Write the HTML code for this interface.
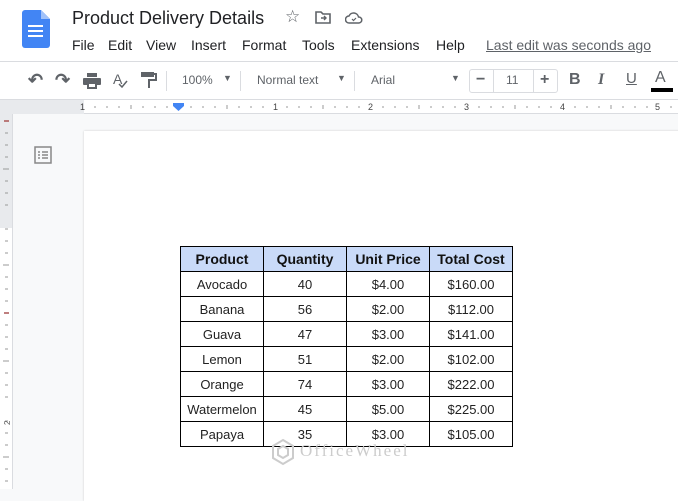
<!DOCTYPE html>
<html><head><style>
*{margin:0;padding:0;box-sizing:border-box}
body{width:678px;height:489px;overflow:hidden;background:#f8f9fa;font-family:"Liberation Sans",Arial,sans-serif;position:relative}
.abs{position:absolute}
.menu span{margin-right:0}
table{border-collapse:collapse;position:absolute;left:180px;top:246px;font-size:13px;color:#222}
td{border:1px solid #000;width:83px;height:25px;text-align:center;padding:0}
tr.h td{background:#c9daf8;font-weight:bold;font-size:14px;color:#111}
</style></head><body>
<div class="abs" style="left:0;top:0;width:678px;height:62px;background:#fff;border-bottom:1px solid #dadce0"></div>
<!-- docs icon -->
<svg class="abs" style="left:22px;top:10px" width="28" height="38" viewBox="0 0 28 38">
<path d="M3 0H19L28 9V35a3 3 0 0 1-3 3H3a3 3 0 0 1-3-3V3a3 3 0 0 1 3-3z" fill="#4285f4"/>
<path d="M19 0V9H28z" fill="#a1c2fa"/>
<rect x="6" y="15" width="15" height="2" fill="#fff"/><rect x="6" y="20" width="15" height="2" fill="#fff"/><rect x="6" y="25" width="15" height="2" fill="#fff"/></svg>
<div class="abs" style="left:72px;top:8px;font-size:18px;color:#202124">Product Delivery Details</div>
<div class="abs" style="left:285px;top:7px;font-size:17px;color:#5f6368">☆</div>
<svg class="abs" style="left:315px;top:11px" width="16" height="13" viewBox="0 0 16 13"><path d="M1 1h5l2 2h7v9H1z" fill="none" stroke="#5f6368" stroke-width="1.6"/><path d="M6 7h5M9 5l2 2-2 2" fill="none" stroke="#5f6368" stroke-width="1.4"/></svg>
<svg class="abs" style="left:345px;top:12px" width="18" height="12" viewBox="0 0 18 12"><path d="M4 11a3.5 3.5 0 0 1 0-7 5 5 0 0 1 9.5 1A3 3 0 0 1 14 11z" fill="none" stroke="#5f6368" stroke-width="1.5"/><path d="M7 7l1.5 1.5L11 6" fill="none" stroke="#5f6368" stroke-width="1.2"/></svg>
<div class="abs menu" style="top:37px;left:0;font-size:14px;color:#202124;white-space:nowrap">
<span class="abs" style="left:72px">File</span><span class="abs" style="left:108px">Edit</span><span class="abs" style="left:146px">View</span><span class="abs" style="left:191px">Insert</span><span class="abs" style="left:242px">Format</span><span class="abs" style="left:302px">Tools</span><span class="abs" style="left:351px">Extensions</span><span class="abs" style="left:436px">Help</span><span class="abs" style="left:486px;color:#5f6368;text-decoration:underline">Last edit was seconds ago</span></div>
<!-- toolbar -->
<div class="abs" style="left:0;top:62px;width:678px;height:38px;background:#fff;border-bottom:1px solid #dadce0"></div>
<div class="abs" style="top:70px;left:28px;font-size:18px;color:#5f6368;font-weight:bold">↶</div>
<div class="abs" style="top:70px;left:55px;font-size:18px;color:#5f6368;font-weight:bold">↷</div>
<svg class="abs" style="left:83px;top:73px" width="18" height="16"><rect x="4" y="0" width="10" height="4" fill="#5f6368"/><rect x="0" y="5" width="18" height="7" rx="1" fill="#5f6368"/><rect x="4" y="10" width="10" height="6" fill="#5f6368"/><rect x="6" y="11" width="6" height="3" fill="#fff"/></svg>
<div class="abs" style="top:71px;left:113px;font-size:14px;color:#5f6368">A</div>
<svg class="abs" style="left:118px;top:80px" width="10" height="8"><path d="M1 4l3 3 5-6" fill="none" stroke="#5f6368" stroke-width="1.5"/></svg>
<svg class="abs" style="left:141px;top:72px" width="16" height="17"><rect x="0" y="0" width="13" height="5" fill="#5f6368"/><path d="M13 2h2v6H8v8" fill="none" stroke="#5f6368" stroke-width="2"/></svg>
<div class="abs" style="left:166px;top:71px;width:1px;height:20px;background:#dadce0"></div>
<div class="abs" style="top:73px;left:182px;font-size:12px;color:#5f6368">100%</div>
<div class="abs" style="top:73px;left:223px;font-size:9px;color:#5f6368">▼</div>
<div class="abs" style="left:240px;top:71px;width:1px;height:20px;background:#dadce0"></div>
<div class="abs" style="top:73px;left:257px;font-size:12px;color:#5f6368">Normal text</div>
<div class="abs" style="top:73px;left:337px;font-size:9px;color:#5f6368">▼</div>
<div class="abs" style="left:354px;top:71px;width:1px;height:20px;background:#dadce0"></div>
<div class="abs" style="top:73px;left:371px;font-size:12px;color:#5f6368">Arial</div>
<div class="abs" style="top:73px;left:451px;font-size:9px;color:#5f6368">▼</div>
<div class="abs" style="left:469px;top:69px;width:89px;height:24px;border:1px solid #dadce0;border-radius:3px"></div>
<div class="abs" style="left:493px;top:70px;width:1px;height:22px;background:#dadce0"></div>
<div class="abs" style="left:533px;top:70px;width:1px;height:22px;background:#dadce0"></div>
<div class="abs" style="top:71px;left:476px;font-size:16px;color:#5f6368;font-weight:bold">−</div>
<div class="abs" style="top:73px;left:506px;font-size:12px;color:#5f6368">11</div>
<div class="abs" style="top:71px;left:540px;font-size:16px;color:#5f6368;font-weight:bold">+</div>
<div class="abs" style="top:71px;left:569px;font-size:16px;color:#5f6368;font-weight:bold">B</div>
<div class="abs" style="top:71px;left:598px;font-size:16px;color:#5f6368;font-style:italic;font-family:'Liberation Serif',serif;font-weight:bold">I</div>
<div class="abs" style="top:70px;left:626px;font-size:15px;color:#5f6368;text-decoration:underline">U</div>
<div class="abs" style="top:69px;left:655px;font-size:16px;color:#5f6368">A</div>
<div class="abs" style="left:651px;top:88px;width:22px;height:4px;background:#000"></div>
<!-- ruler -->
<div class="abs" style="left:0;top:100px;width:678px;height:14px;background:#fff;border-bottom:1px solid #dadce0"></div>
<div class="abs" style="left:0;top:100px;width:84px;height:14px;background:#e8eaed"></div>
<svg class="abs" style="left:0;top:100px" width="678" height="14">
<g stroke="#999" stroke-width="1">
<path d="M95 6v2M107 6v2M119 6v2M131 5v4M143 6v2M155 6v2M167 6v2M191 6v2M203 6v2M215 6v2M227 5v4M239 6v2M251 6v2M263 6v2M287 6v2M299 6v2M311 6v2M323 5v4M335 6v2M347 6v2M359 6v2M383 6v2M395 6v2M407 6v2M419 5v4M431 6v2M443 6v2M455 6v2M479 6v2M491 6v2M503 6v2M515 5v4M527 6v2M539 6v2M551 6v2M575 6v2M587 6v2M599 6v2M611 5v4M623 6v2M635 6v2M647 6v2M671 6v2"/></g>
<g font-size="9" fill="#444" font-family="Liberation Sans"><text x="80" y="10">1</text><text x="273" y="10">1</text><text x="368" y="10">2</text><text x="464" y="10">3</text><text x="560" y="10">4</text><text x="655" y="10">5</text></g>
<path d="M173 3h11v3l-5.5 5-5.5-5z" fill="#4285f4"/></svg>
<!-- vertical ruler -->
<div class="abs" style="left:0;top:114px;width:13px;height:375px;background:#fff;border-right:1px solid #dadce0"></div>
<div class="abs" style="left:0;top:114px;width:13px;height:114px;background:#e8eaed;border-right:1px solid #dadce0"></div>
<svg class="abs" style="left:0;top:114px" width="13" height="375"><g stroke="#999"><path d="M5 19h3M5 31h3M5 43h3M3 55h6M5 67h3M5 79h3M5 91h3M5 115h3M5 127h3M5 139h3M3 151h6M5 163h3M5 175h3M5 187h3M5 211h3M5 223h3M5 235h3M3 247h6M5 259h3M5 271h3M5 283h3M5 307h3M5 319h3M5 331h3M3 343h6M5 355h3M5 367h3"/></g>
<path d="M4 7h5M4 199h5" stroke="#a55" stroke-width="1.5"/><text x="3" y="312" font-size="8" fill="#555" font-family="Liberation Sans" transform="rotate(-90 6 308)">2</text></svg>
<svg class="abs" style="left:34px;top:146px" width="18" height="18"><rect x="1" y="1" width="16" height="16" fill="none" stroke="#888" stroke-width="1.5"/><path d="M4 6h2M8 6h6M4 9h2M8 9h6M4 12h2M8 12h6" stroke="#888" stroke-width="1.5"/></svg>
<!-- page -->
<div class="abs" style="left:84px;top:131px;width:600px;height:370px;background:#fff;box-shadow:0 0 2px #ccc"></div>
<table>
<tr class="h"><td>Product</td><td>Quantity</td><td>Unit Price</td><td>Total Cost</td></tr>
<tr><td>Avocado</td><td>40</td><td>$4.00</td><td>$160.00</td></tr>
<tr><td>Banana</td><td>56</td><td>$2.00</td><td>$112.00</td></tr>
<tr><td>Guava</td><td>47</td><td>$3.00</td><td>$141.00</td></tr>
<tr><td>Lemon</td><td>51</td><td>$2.00</td><td>$102.00</td></tr>
<tr><td>Orange</td><td>74</td><td>$3.00</td><td>$222.00</td></tr>
<tr><td>Watermelon</td><td>45</td><td>$5.00</td><td>$225.00</td></tr>
<tr><td>Papaya</td><td>35</td><td>$3.00</td><td>$105.00</td></tr>
</table>
<svg class="abs" style="left:270px;top:438px" width="26" height="28"><path d="M13 2l10 6v12l-10 6-10-6V8z" fill="none" stroke="#ccc" stroke-width="2"/><path d="M13 8l5 3v6l-5 3-5-3v-6z" fill="none" stroke="#ccc" stroke-width="2"/></svg>
<div class="abs" style="left:300px;top:441px;font-size:17px;color:#ccc;font-family:'Liberation Serif',serif;letter-spacing:2px">OfficeWheel</div>
</body></html>
